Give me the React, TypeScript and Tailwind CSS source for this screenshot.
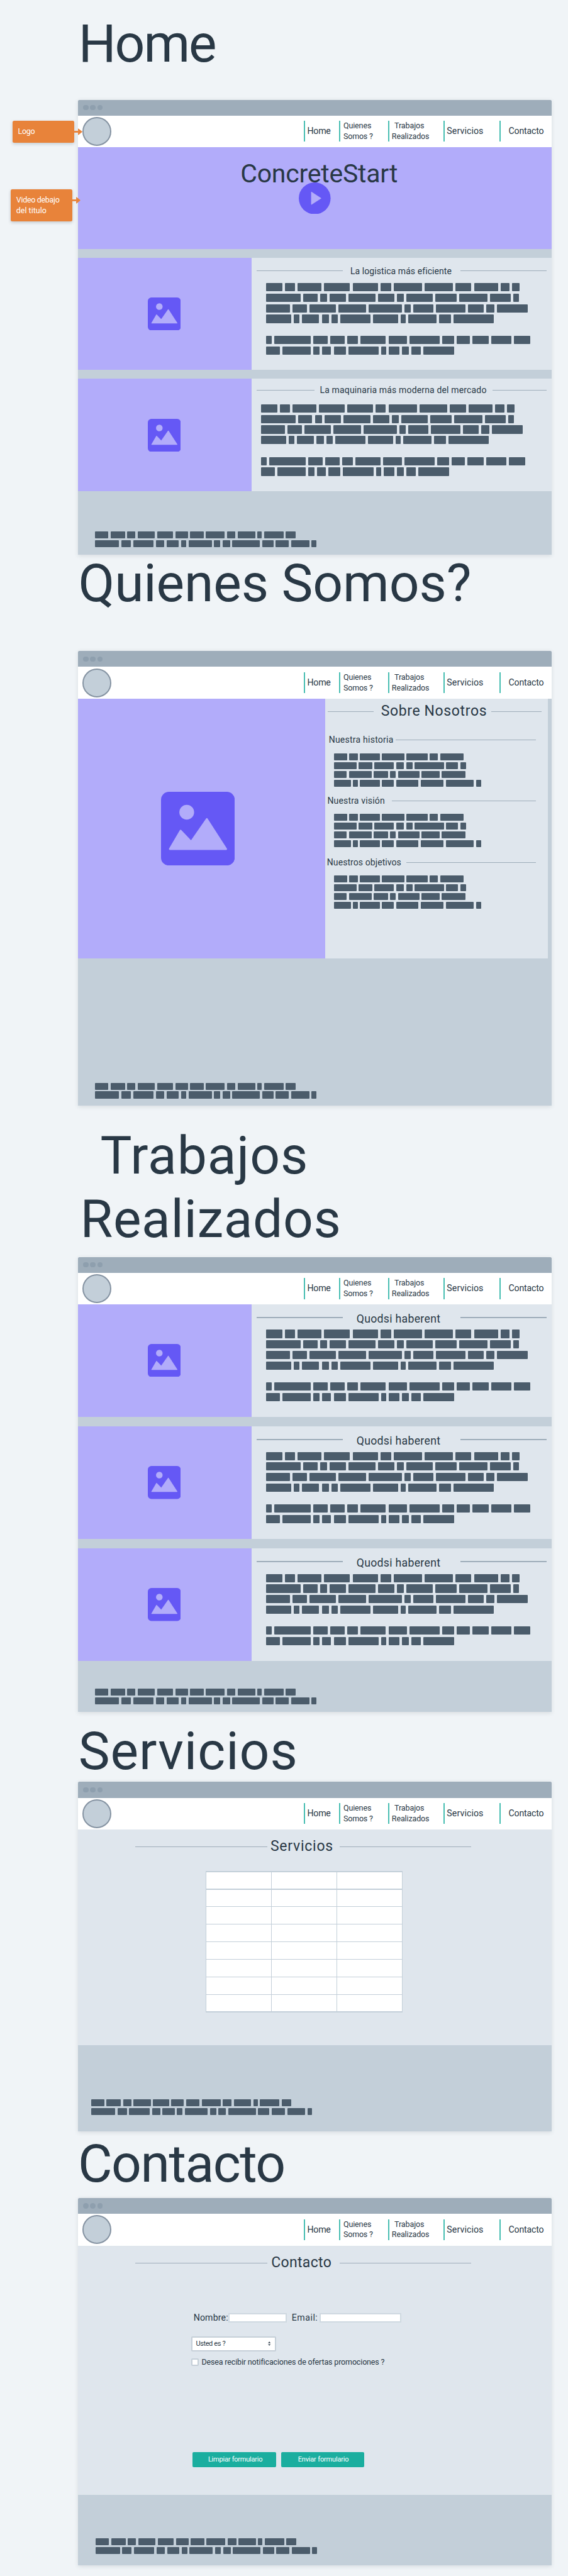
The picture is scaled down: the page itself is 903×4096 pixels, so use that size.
import type { ReactNode } from "react";

/* Placeholder copy: every number is the length of one greeked word. */
const PARAGRAPH = [
  [46, 27, 66, 72, 71, 28, 79, 77, 45, 66, 25, 21],
  [96, 39, 20, 45, 74, 46, 19, 72, 59, 79, 57, 16],
  [67, 39, 73, 76, 93, 16, 56, 81, 44, 22, 86],
  [70, 15, 48, 20, 17, 84, 69, 14, 78, 33, 111],
  [],
  [16, 100, 41, 40, 29, 70, 51, 83, 33, 37, 45, 56, 44],
  [39, 78, 17, 25, 33, 84, 14, 29, 20, 26, 85],
];

const SHORT_PARAGRAPH = [
  [37, 23, 55, 61, 58, 23, 65],
  [63, 37, 54, 21, 18, 80, 33, 17],
  [36, 62, 39, 16, 59, 49, 65],
  [47, 13, 55, 33, 61, 63, 78, 14],
];

const FOOTER_COPY = [
  [37, 40, 22, 48, 44, 35, 37, 52, 24, 48, 12, 54, 27],
  [67, 26, 57, 23, 34, 15, 64, 17, 21, 76, 31, 37, 50, 13],
];

const WORD_UNIT = 0.576;

function Greek({ lines, small = false, className = "" }: { lines: number[][]; small?: boolean; className?: string }) {
  return (
    <div className={`flex flex-col ${small ? "gap-[2.8px]" : "gap-[3.55px]"} ${className}`}>
      {lines.map((words, i) => (
        <div key={i} className={small ? "flex h-[11.2px] gap-[3.55px]" : "flex h-[13.2px] gap-[4.05px]"}>
          {words.map((w, j) => (
            <span key={j} className="rounded-[1px] bg-[#4b5c6b]" style={{ width: w * WORD_UNIT }} />
          ))}
        </div>
      ))}
    </div>
  );
}

function ImageIcon({ className }: { className: string }) {
  return (
    <svg viewBox="0 0 168 168" className={className}>
      <rect width="168" height="168" rx="18" fill="#6558f5" />
      <circle cx="58.6" cy="46.6" r="16.8" fill="#b2acfa" />
      <path
        d="M20 130.5 44.6 88.5 68.6 113.5 104.4 62 148.5 130.5Z"
        fill="#b2acfa"
        stroke="#b2acfa"
        strokeWidth="4"
        strokeLinejoin="round"
      />
    </svg>
  );
}

function Rule({ className }: { className: string }) {
  return <span className={`h-[1.4px] bg-[#9eadba] ${className}`} />;
}

function Nav() {
  const item = "flex h-[33.5px] items-center border-l-2 border-[#1aae9f]/80";
  return (
    <nav className="flex h-[50.3px] items-center bg-white">
      <span className="ml-[7.2px] size-[46px] rounded-full border-2 border-[#8593a2] bg-[#c3cfd9]" />
      <div className={`${item} ml-[306.3px] w-[55.5px] pl-[3.1px] text-[14.2px] tracking-[-0.023em]`}>Home</div>
      <div className={`${item} w-[78.2px] pl-[5px] text-[12.5px] leading-[16.8px]`}>
        <div>
          <p className="tracking-[-0.0105em]">Quienes</p>
          <p className="tracking-[-0.016em]">Somos ?</p>
        </div>
      </div>
      <div className={`${item} w-[88px] pl-[3.7px] text-[12.5px] leading-[16.8px]`}>
        <div>
          <p className="pl-[4.2px] tracking-[-0.008em]">Trabajos</p>
          <p className="tracking-[-0.01em]">Realizados</p>
        </div>
      </div>
      <div className={`${item} w-[89.3px] pl-[3.2px] text-[14.2px] tracking-[0.005em]`}>Servicios</div>
      <div className={`${item} pl-[12px] text-[14.2px] tracking-[-0.014em]`}>Contacto</div>
    </nav>
  );
}

function BrowserFrame({ className, children }: { className: string; children: ReactNode }) {
  return (
    <section
      className={`ml-[124px] flex w-[753px] flex-none flex-col rounded-t-[2.5px] bg-[#c3cfd9] shadow-[0_1.5px_6px_rgba(41,56,69,0.12)] ${className}`}
    >
      <div className="flex h-[25.1px] flex-none items-center gap-[2.8px] rounded-t-[2.5px] bg-[#9eadba] pl-[8.2px]">
        <span className="size-[8.4px] rounded-full bg-[#8e9fae]" />
        <span className="size-[8.4px] rounded-full bg-[#8e9fae]" />
        <span className="size-[8.4px] rounded-full bg-[#8e9fae]" />
      </div>
      <Nav />
      {children}
    </section>
  );
}

function Footer({ className }: { className: string }) {
  return (
    <footer className={`flex flex-1 flex-col justify-end ${className}`}>
      <Greek lines={FOOTER_COPY} small />
    </footer>
  );
}

function MediaCard({ heading, copyClass }: { heading: ReactNode; copyClass: string }) {
  return (
    <article className="flex h-[178.7px] flex-none">
      <div className="flex w-[276px] items-center justify-center bg-[#b2acfa] pr-[2px]">
        <ImageIcon className="size-[52.4px]" />
      </div>
      <div className="flex-1 bg-[#dfe6ed]">
        {heading}
        <Greek lines={PARAGRAPH} className={copyClass} />
      </div>
    </article>
  );
}

function QuodsiCard() {
  return (
    <MediaCard
      copyClass="ml-[22.8px]"
      heading={
        <header className="mt-[10.9px] mb-[9.6px] flex h-5 items-center px-[8.3px]">
          <Rule className="w-[136.4px]" />
          <h3 className="ml-[22px] w-[165.2px] pt-[4px] text-[17.7px] leading-5 tracking-[0.0164em]">Quodsi haberent</h3>
          <Rule className="flex-1" />
        </header>
      }
    />
  );
}

function TopicHeading({ className, textClass, children }: { className: string; textClass: string; children: string }) {
  return (
    <header className={`flex h-5 items-center pr-[19px] text-[14px] ${className}`}>
      <h3 className={textClass}>{children}</h3>
      <Rule className="flex-1" />
    </header>
  );
}

function PageTitle({ textClass, children }: { textClass: string; children: string }) {
  return (
    <header className="mt-[12.9px] flex h-[30px] items-center pl-[91.4px] text-[23px]">
      <Rule className="w-[209.6px]" />
      <h2 className={textClass}>{children}</h2>
      <Rule className="w-[209.1px]" />
    </header>
  );
}

function Note({ className, children }: { className: string; children: ReactNode }) {
  return (
    <aside className={`absolute w-[97.8px] rounded-[2.5px] bg-[#e8833a] pl-[8.4px] text-[12.5px] leading-[16.75px] text-white shadow-[0_2px_5px_rgba(41,56,69,0.22)] ${className}`}>
      {children}
      <svg viewBox="0 0 13 11" className="absolute top-[12.1px] left-full h-[11px] w-[13px]" fill="#e8833a">
        <path d="M0 4.1H6V6.9H0Z" />
        <path d="M6.6 .8 12.4 5.5 6.6 10.2Z" stroke="#e8833a" strokeWidth="1" strokeLinejoin="round" />
      </svg>
    </aside>
  );
}

export default function App() {
  return (
    <main className="relative flex h-[4096px] w-[903px] flex-col overflow-hidden bg-[#f0f4f7] font-['Roboto',sans-serif] whitespace-nowrap text-[#293845]">
      <h1 className="h-[158.5px] flex-none pt-[27.5px] pl-[124.7px] text-[84px] leading-[84px] tracking-[-0.0243em]">Home</h1>
      <BrowserFrame className="h-[723.2px]">
        <div className="relative flex h-[161.9px] flex-none items-center justify-center bg-[#b2acfa]">
          <svg viewBox="0 0 50.6 50.6" className="size-[50.6px]">
            <circle cx="25.3" cy="25.3" r="25.3" fill="#6558f5" />
            <path d="M20 15.2 35.4 25.3 20 35.2Z" fill="#b2acfa" stroke="#b2acfa" strokeWidth=".8" strokeLinejoin="round" />
          </svg>
          <h2 className="absolute top-[22px] left-[258.2px] text-[41px] leading-[41px] tracking-[-0.0055em]">ConcreteStart</h2>
        </div>
        <div className="mt-[14px] flex flex-none flex-col gap-[14px]">
          <MediaCard
            copyClass="ml-[22.8px]"
            heading={
              <header className="mt-[10.9px] mb-[9.6px] flex h-5 items-center px-[8.3px]">
                <Rule className="w-[136.4px]" />
                <h3 className="ml-[12.2px] w-[175px] text-[14px] leading-5 tracking-[0.0056em]">La logistica más eficiente</h3>
                <Rule className="flex-1" />
              </header>
            }
          />
          <MediaCard
            copyClass="ml-[14.7px]"
            heading={
              <header className="mt-[8px] mb-[12.5px] flex h-5 items-center px-[8.3px]">
                <Rule className="w-[92px]" />
                <h3 className="ml-[8.2px] w-[274.5px] text-[14px] leading-5 tracking-[0.0112em]">La maquinaria más moderna del mercado</h3>
                <Rule className="flex-1" />
              </header>
            }
          />
        </div>
        <Footer className="pb-[11.8px] pl-[26.9px]" />
      </BrowserFrame>

      <h1 className="h-[153.6px] flex-none pt-[4.5px] pl-[124.5px] text-[84px] leading-[84px] tracking-[-0.0016em]">Quienes Somos?</h1>
      <BrowserFrame className="h-[723.2px]">
        <div className="flex h-[413.2px] flex-none">
          <div className="flex w-[392.8px] items-center justify-center bg-[#b2acfa] pr-[11px]">
            <ImageIcon className="size-[117.2px]" />
          </div>
          <div className="w-[354.5px] bg-[#dfe6ed]">
            <header className="mt-[6px] flex h-[30px] items-center pl-[4.6px]">
              <Rule className="w-[72.6px]" />
              <h2 className="ml-[11.7px] w-[175.4px] text-[23px] tracking-[0.0271em]">Sobre Nosotros</h2>
              <Rule className="w-[79.5px]" />
            </header>
            <TopicHeading className="mt-5 pl-[5.9px]" textClass="w-[106.4px] tracking-[0.0171em]">Nuestra historia</TopicHeading>
            <Greek lines={SHORT_PARAGRAPH} small className="mt-[11.2px] ml-[13.8px]" />
            <TopicHeading className="mt-[12.8px] pl-[3.6px]" textClass="w-[102.9px] tracking-[0.0127em]">Nuestra visión</TopicHeading>
            <Greek lines={SHORT_PARAGRAPH} small className="mt-[10.3px] ml-[13.8px]" />
            <TopicHeading className="mt-[14.3px] pl-[3px]" textClass="w-[126px] tracking-[0.0055em]">Nuestros objetivos</TopicHeading>
            <Greek lines={SHORT_PARAGRAPH} small className="mt-[10.3px] ml-[13.8px]" />
          </div>
        </div>
        <Footer className="pb-[11.8px] pl-[26.9px]" />
      </BrowserFrame>

      <h1 className="h-[240.1px] flex-none pt-[29.7px] pl-[127.6px] text-[84px] leading-[100.5px]">
        <span className="block pl-[31.8px] tracking-[0.0107em]">Trabajos</span>
        <span className="block tracking-[0.0071em]">Realizados</span>
      </h1>
      <BrowserFrame className="h-[723.2px]">
        <div className="flex flex-none flex-col gap-[15.4px]">
          <QuodsiCard />
          <QuodsiCard />
          <QuodsiCard />
        </div>
        <Footer className="pb-[11.8px] pl-[26.9px]" />
      </BrowserFrame>

      <h1 className="h-[111.7px] flex-none pt-[21.2px] pl-[124.7px] text-[84px] leading-[84px] tracking-[0.0115em]">Servicios</h1>
      <BrowserFrame className="h-[555.6px]">
        <div className="flex h-[343.4px] flex-none flex-col bg-[#dfe6ed]">
          <PageTitle textClass="ml-[4.9px] w-[109.7px] tracking-[0.033em]">Servicios</PageTitle>
          <div className="mt-[23.5px] ml-[202.5px] grid h-[224.6px] w-[313.9px] grid-cols-3 grid-rows-8 gap-[1.4px] bg-[#c3cfd9] p-[1.4px]">
            {Array.from({ length: 24 }, (_, i) => (
              <div key={i} className="bg-white" />
            ))}
          </div>
        </div>
        <Footer className="pb-[25.8px] pl-[20.5px]" />
      </BrowserFrame>

      <h1 className="h-[106.1px] flex-none pt-[10.2px] pl-[123.9px] text-[84px] leading-[84px] tracking-[-0.0176em]">Contacto</h1>
      <BrowserFrame className="h-[583.6px]">
        <div className="flex h-[396.5px] flex-none flex-col bg-[#dfe6ed]">
          <PageTitle textClass="ml-[6.2px] w-[108.4px] tracking-[0.0145em]">Contacto</PageTitle>
          <form className="mt-[64.6px]">
            <div className="ml-[183.7px] flex h-[14.6px] items-center text-[14.2px] leading-[14px]">
              <label className="w-[55.3px] tracking-[0.0075em]">Nombre:</label>
              <span className="h-full w-[92.8px] border-2 border-[#cfd9e1] bg-white" />
              <label className="ml-2 w-[44.4px] tracking-[0.0345em]">Email:</label>
              <span className="h-full w-[129.6px] border-2 border-[#cfd9e1] bg-white" />
            </div>
            <div className="mt-[22.4px] ml-[179.8px] flex h-[23.7px] w-[135.3px] items-center justify-between rounded-[2px] border-2 border-[#c5cfd8] bg-white pr-[6.5px] pl-[5.6px] text-[11px] tracking-[-0.0345em]">
              Usted es ?
              <svg viewBox="0 0 5 8" className="h-[7px] w-[4.4px]" fill="#293845">
                <path d="M2.5 .3 4.9 3H.1ZM2.5 7.7 4.9 5H.1Z" />
              </svg>
            </div>
            <div className="mt-[11.2px] ml-[179.8px] flex h-[12.5px] items-center">
              <span className="size-[12.5px] rounded-[2px] border-2 border-[#c5cfd8] bg-white" />
              <label className="ml-[4.2px] text-[12.5px] leading-[12.5px] tracking-[-0.0123em]">
                Desea recibir notificaciones de ofertas promociones ?
              </label>
            </div>
            <div className="mt-[136.9px] ml-[182.4px] flex gap-[7.6px] text-[11px] text-white">
              <button type="button" className="h-[23.7px] w-[132.7px] rounded-[2px] bg-[#1aae9f] pl-[24.5px] text-left tracking-[-0.02em]">
                Limpiar formulario
              </button>
              <button type="button" className="h-[23.7px] w-[132.7px] rounded-[2px] bg-[#1aae9f] pl-[27px] text-left tracking-[-0.0157em]">
                Enviar formulario
              </button>
            </div>
          </form>
        </div>
        <Footer className="pb-[17.5px] pl-[28px]" />
      </BrowserFrame>

      <Note className="top-[192px] left-[20.2px] h-[34.9px] pt-[9.4px]">
        <p className="tracking-[-0.0288em]">Logo</p>
      </Note>
      <Note className="top-[300.9px] left-[17.4px] h-[51.6px] pt-[9.3px]">
        <p className="tracking-[-0.0254em]">Video debajo</p>
        <p>del titulo</p>
      </Note>
    </main>
  );
}
